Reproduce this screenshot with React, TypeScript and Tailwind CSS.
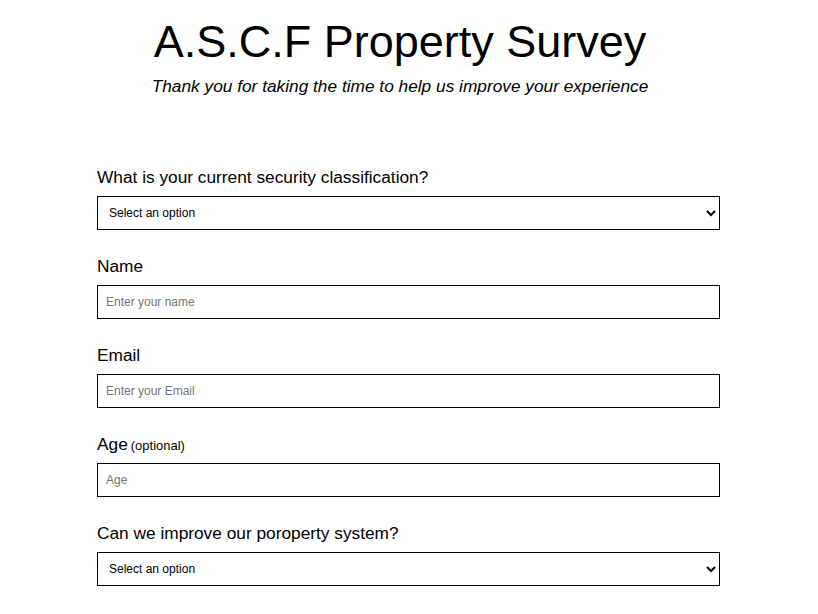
import React from 'react';

const font = { fontFamily: '"Liberation Sans", Arial, sans-serif' };

function Field({ label, extra, children }: { label: string; extra?: string; children: React.ReactNode }) {
  return (
    <div className="flex flex-col">
      <label className="h-[20px] text-[17.3px] leading-[20px] text-black mb-[9px] whitespace-nowrap">
        {label}
        {extra && <span className="text-[13px] leading-none ml-[3px]">{extra}</span>}
      </label>
      {children}
    </div>
  );
}

function Select() {
  return (
    <select className="h-[34px] w-full border border-black bg-white px-[7px] text-[12px] text-black rounded-none">
      <option>Select an option</option>
    </select>
  );
}

function Input({ placeholder }: { placeholder: string }) {
  return (
    <input
      placeholder={placeholder}
      className="h-[34px] w-full border border-black bg-white px-[8px] text-[12px] text-black placeholder:text-[#757575] outline-none"
    />
  );
}

export default function App() {
  return (
    <div className="min-h-screen bg-white" style={font}>
      <header className="flex flex-col items-center pt-[14px] w-[800px]">
        <h1 className="text-[45px] leading-[56px] text-black">A.S.C.F Property Survey</h1>
        <p className="italic text-[17.3px] leading-[20px] mt-[6px] text-black">
          Thank you for taking the time to help us improve your experience
        </p>
      </header>

      <form className="ml-[97px] w-[623px] mt-[71px] flex flex-col gap-[26px]">
        <Field label="What is your current security classification?">
          <Select />
        </Field>
        <Field label="Name">
          <Input placeholder="Enter your name" />
        </Field>
        <Field label="Email">
          <Input placeholder="Enter your Email" />
        </Field>
        <Field label="Age" extra="(optional)">
          <Input placeholder="Age" />
        </Field>
        <Field label="Can we improve our poroperty system?">
          <Select />
        </Field>
      </form>
    </div>
  );
}
